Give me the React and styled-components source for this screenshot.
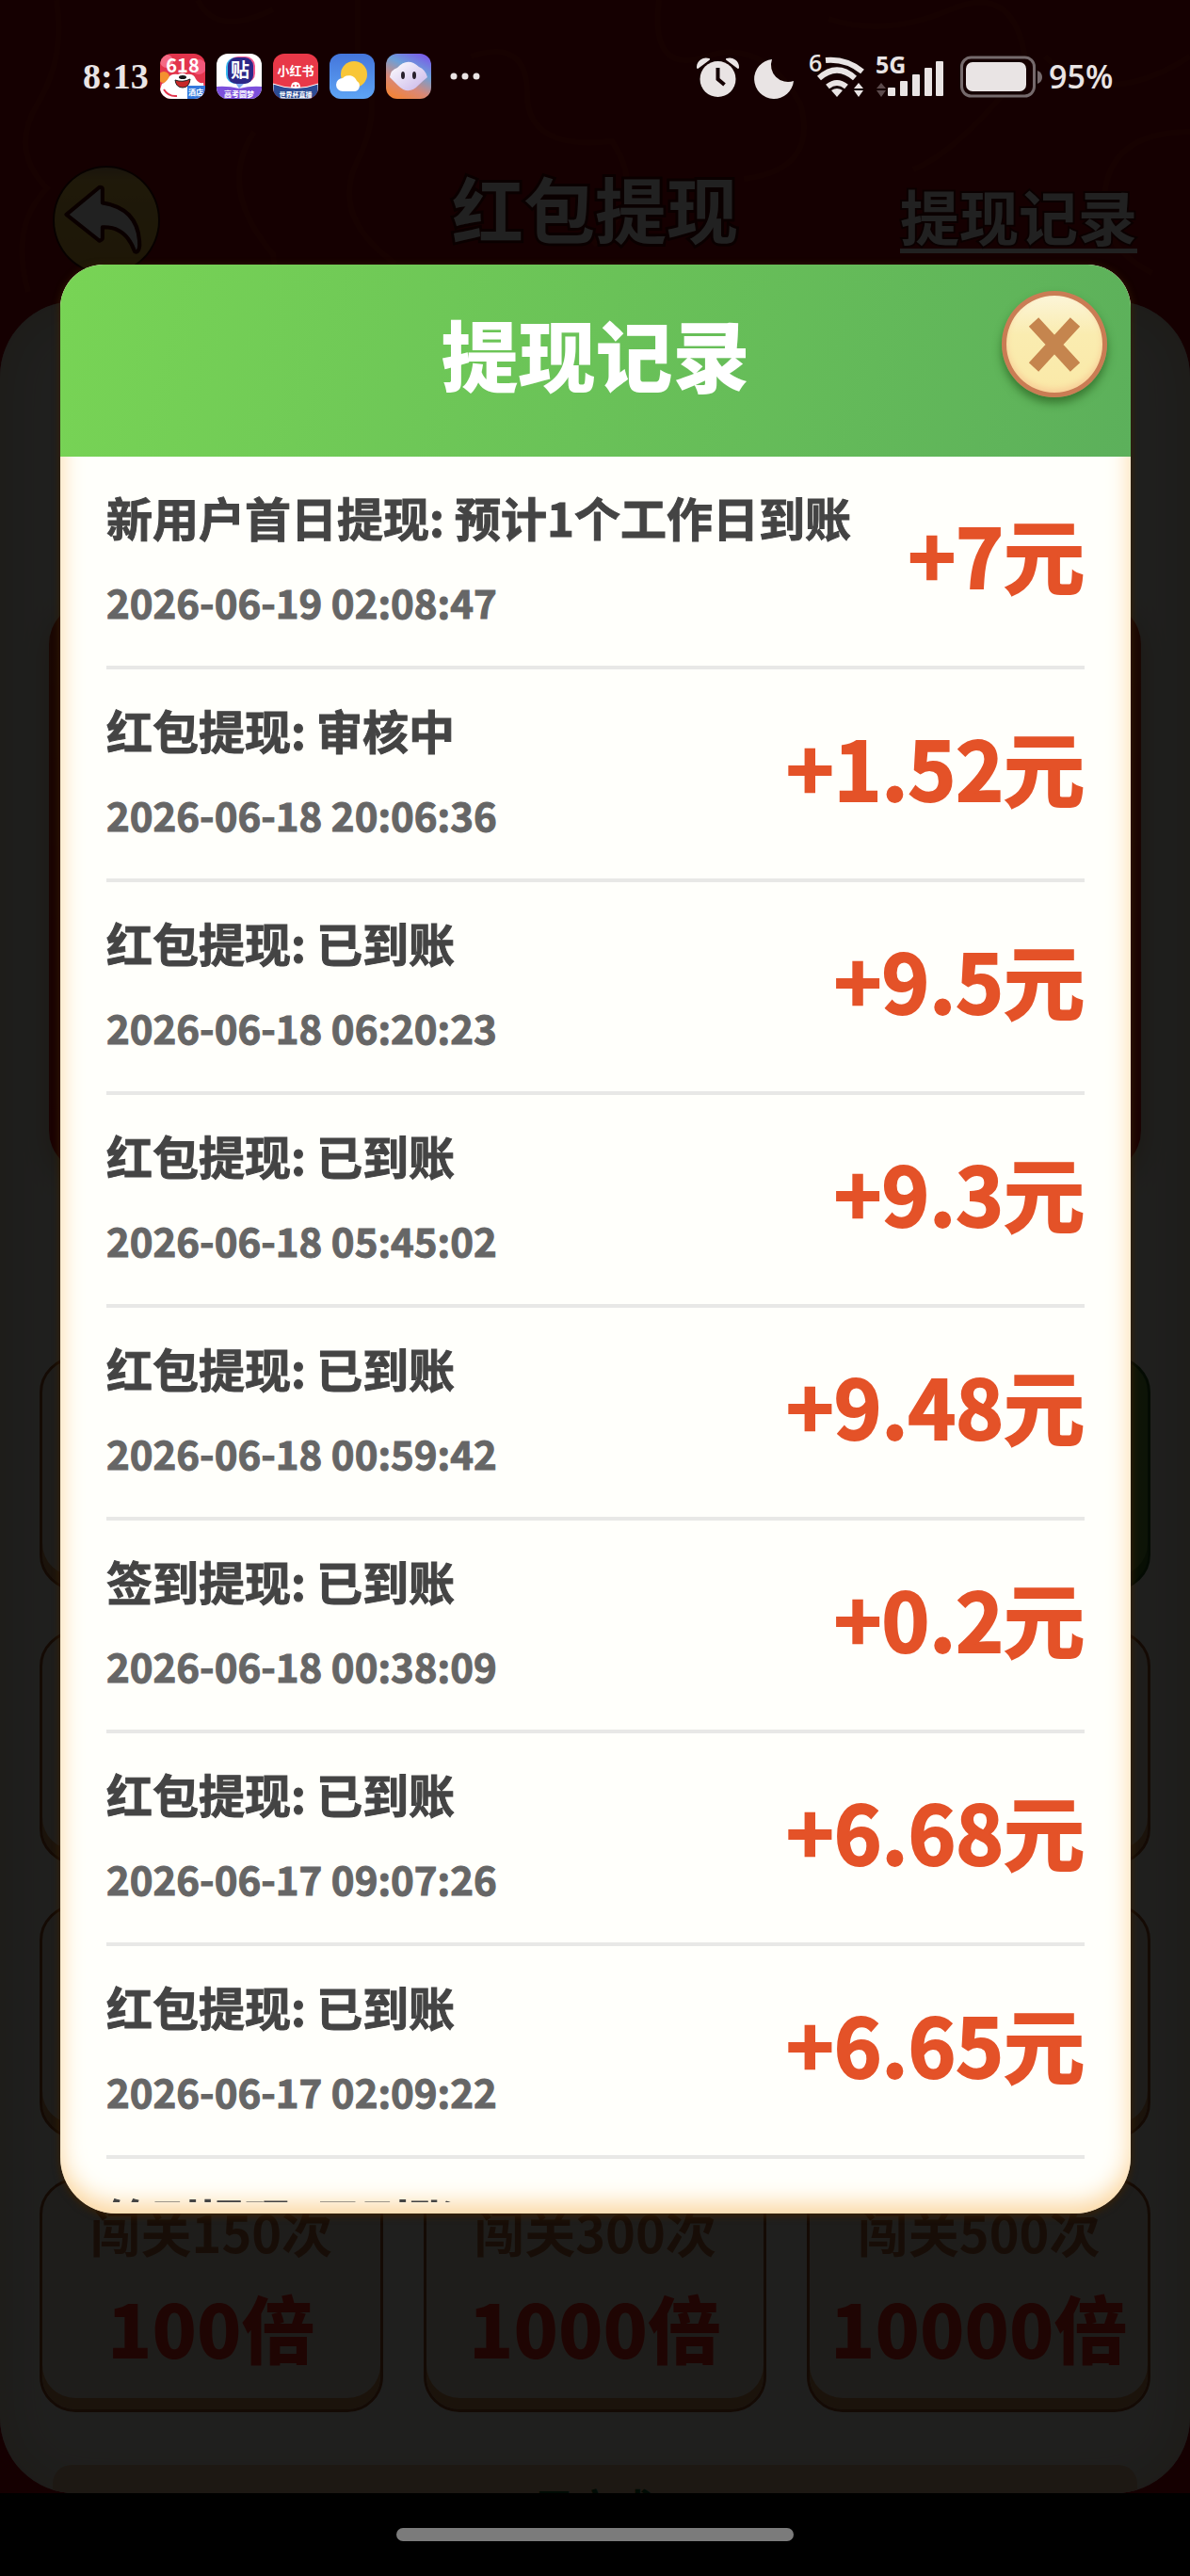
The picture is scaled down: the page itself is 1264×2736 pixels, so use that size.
import React from "react";
import styled, { createGlobalStyle } from "styled-components";

const GlobalStyle = createGlobalStyle`
  * {
    box-sizing: border-box;
  }

  body {
    margin: 0;
    background: #000;
    font-family: "Noto Sans CJK SC", "Noto Sans", sans-serif;
  }

  button {
    padding: 0;
    font: inherit;
    cursor: pointer;
  }

  h1,
  h2,
  p,
  ul {
    margin: 0;
    padding: 0;
  }
`;

const records = [
  { title: "新用户首日提现: 预计1个工作日到账", time: "2026-06-19 02:08:47", amount: "7" },
  { title: "红包提现: 审核中", time: "2026-06-18 20:06:36", amount: "1.52" },
  { title: "红包提现: 已到账", time: "2026-06-18 06:20:23", amount: "9.5" },
  { title: "红包提现: 已到账", time: "2026-06-18 05:45:02", amount: "9.3" },
  { title: "红包提现: 已到账", time: "2026-06-18 00:59:42", amount: "9.48" },
  { title: "签到提现: 已到账", time: "2026-06-18 00:38:09", amount: "0.2" },
  { title: "红包提现: 已到账", time: "2026-06-17 09:07:26", amount: "6.68" },
  { title: "红包提现: 已到账", time: "2026-06-17 02:09:22", amount: "6.65" },
  { title: "签到提现: 已到账" },
];

const tiles = [
  { id: 1 },
  { id: 2 },
  { id: 3, active: true },
  { id: 4 },
  { id: 5 },
  { id: 6 },
  { id: 7 },
  { id: 8 },
  { id: 9 },
  { id: 10, label: "闯关150次", value: "100倍" },
  { id: 11, label: "闯关300次", value: "1000倍" },
  { id: 12, label: "闯关500次", value: "10000倍" },
];

/* ---------- page shell ---------- */

const Page = styled.div`
  position: relative;
  min-height: 100vh;
  display: flex;
  flex-direction: column;
`;

const Screen = styled.main`
  position: relative;
  flex: 1;
  display: flex;
  flex-direction: column;
  background: #a3000c;
  overflow: hidden;
`;

const Pattern = styled.svg`
  position: absolute;
  top: 0;
  left: 0;
  width: 100%;
  height: 420px;
  fill: none;
  stroke: #b0120a;
  stroke-width: 6;
`;

const NavBar = styled.footer`
  height: 88px;
  display: flex;
  justify-content: center;
  padding-top: 37px;
  background: #000;
`;

const HomeHandle = styled.span`
  width: 422px;
  height: 14px;
  border-radius: 7px;
  background: #7b7b7b;
`;

/* ---------- status bar ---------- */

const StatusBar = styled.header`
  position: absolute;
  z-index: 3;
  top: 0;
  left: 0;
  right: 0;
  height: 162px;
  padding: 0 80px 0 88px;
  display: flex;
  align-items: center;
  justify-content: space-between;
  color: #e9e4e4;
`;

const StatusGroup = styled.div`
  display: flex;
  align-items: center;
  gap: ${(props) => props.$gap}px;
`;

const Clock = styled.time`
  width: 70px;
  font: bold 38px/48px "Liberation Serif", serif;
`;

const Percent = styled.span`
  width: 70px;
  font: 600 34px/44px "Open Sans", sans-serif;
`;

/* ---------- page behind the dialog ---------- */

const TopBar = styled.div`
  position: relative;
  margin-top: 170px;
  height: 150px;
  padding: 0 56px;
  display: grid;
  grid-template-columns: 1fr auto 1fr;
  align-items: start;
`;

const BackButton = styled.button`
  width: 114px;
  height: 116px;
  margin-top: 6px;
  border: 2px solid #3a0800;
  border-radius: 50%;
  background: linear-gradient(#c8a060, #ecc04c 12%, #e0ae38);
`;

const PageTitle = styled.h1`
  font-size: 76px;
  line-height: 100px;
  color: #fff;
  -webkit-text-stroke: 6px #500000;
  paint-order: stroke fill;
`;

const RecordLink = styled.a`
  justify-self: end;
  margin-top: 22px;
  border-bottom: 5px solid #fff;
  font-size: 63px;
  font-weight: 700;
  line-height: 72px;
  color: #fff;
  text-decoration: none;
  -webkit-text-stroke: 4px #500000;
  paint-order: stroke fill;
`;

const Card = styled.section`
  position: relative;
  flex: 1;
  padding-top: 320px;
  display: flex;
  flex-direction: column;
  border-radius: 80px;
  background: #eeeee6;
  box-shadow: inset 0 0 60px #d8c8a8;
  overflow: hidden;
`;

const Banner = styled.div`
  height: 605px;
  margin: 0 52px;
  border-radius: 44px;
  background: linear-gradient(#c83c18, #c41c10 60%, #c81410);
  box-shadow: 0 10px 30px #d0b890;
`;

const Tiles = styled.div`
  margin: 196px 42px 0;
  display: grid;
  grid-template-columns: repeat(3, 1fr);
  grid-auto-rows: 248px;
  gap: 43px;
`;

const Tile = styled.button`
  display: flex;
  flex-direction: column;
  align-items: center;
  justify-content: flex-start;
  padding-top: 18px;
  border: 3px solid ${(props) => (props.$active ? "#205818" : "#984c20")};
  border-radius: 38px;
  background: ${(props) => (props.$active ? "linear-gradient(90deg, #b8a040, #68983c)" : "#e4dccc")};
  box-shadow: inset 0 -12px 0 ${(props) => (props.$active ? "#407820" : "#d09458")};
  white-space: nowrap;
`;

const TileLabel = styled.span`
  font-size: 54px;
  font-weight: 700;
  line-height: 70px;
  color: #b06838;
`;

const TileValue = styled.span`
  margin-top: 16px;
  font-size: 78px;
  font-weight: 900;
  line-height: 100px;
  color: #f02c1c;
`;

const CardFooter = styled.p`
  flex: 1 0 30px;
  min-height: 0;
  margin: 56px 56px 0;
  padding-top: 14px;
  border-radius: 20px 20px 0 0;
  background: #dcb894;
  text-align: center;
  font-size: 42px;
  font-weight: 700;
  line-height: 60px;
  color: #085820;
  overflow: hidden;
`;

/* ---------- dialog ---------- */

const Overlay = styled.div`
  position: absolute;
  z-index: 2;
  inset: 0;
  padding: 281px 63px 297px 64px;
  display: flex;
  background: rgba(0, 0, 0, 0.87);
`;

const Dialog = styled.section`
  position: relative;
  flex: 1;
  min-width: 0;
  display: flex;
  flex-direction: column;
  padding-bottom: 12px;
  border-radius: 46px 46px 60px 60px;
  background: #fffffb;
  box-shadow: inset 0 -10px 24px #fbd6a0, 0 2px 8px #3c2204;
  overflow: hidden;
`;

const DialogHeader = styled.header`
  flex: none;
  height: 204px;
  display: flex;
  align-items: center;
  justify-content: center;
  padding-bottom: 16px;
  background: linear-gradient(105deg, #78d455, #5cb05b);
`;

const DialogTitle = styled.h2`
  font-size: 82px;
  font-weight: 900;
  line-height: 110px;
  color: #fff;
`;

const CloseButton = styled.button`
  position: absolute;
  top: 28px;
  right: 25px;
  width: 112px;
  height: 113px;
  display: flex;
  align-items: center;
  justify-content: center;
  border: 5px solid #ca7c54;
  border-radius: 50%;
  background: linear-gradient(#fcf5d8, #faecb0 40%, #fae9a8);
  box-shadow: inset 0 -4px 6px #f8cf98, 0 6px 10px rgba(30, 80, 20, 0.6);
`;

const RecordList = styled.ul`
  flex: 1;
  height: 0;
  margin: 0 49px;
  overflow: hidden;
  list-style: none;
`;

const RecordItem = styled.li`
  height: 226px;
  padding-top: 34px;
  display: flex;
  justify-content: space-between;
  border-bottom: 4px solid #e8e8e6;
  white-space: nowrap;
`;

const RecordTitle = styled.p`
  font-size: 49px;
  font-weight: 700;
  line-height: 60px;
  color: #444;
  -webkit-text-stroke: 1px #444;
`;

const RecordTime = styled.time`
  display: block;
  margin-top: 30px;
  font-size: 42px;
  font-weight: 700;
  line-height: 60px;
  color: #666;
  -webkit-text-stroke: 1px #666;
`;

const Amount = styled.strong`
  font-size: 86px;
  font-weight: 700;
  line-height: 138px;
  color: #e45228;
  -webkit-text-stroke: 2px #e45228;
`;

/* ---------- icons ---------- */

function AppIcons() {
  return (
    <svg width='348' height='48' viewBox='0 0 348 48' fontFamily='Noto Sans CJK SC' fontWeight='700' textAnchor='middle'>
      <defs>
        <clipPath id='tile'>
          <rect width='48' height='48' rx='12' />
        </clipPath>
        <linearGradient id='sky' x2='0' y2='1'>
          <stop stopColor='#4476dc' />
          <stop offset='1' stopColor='#5ea4f4' />
        </linearGradient>
        <linearGradient id='pet' x1='0.8' y1='0' x2='0.3' y2='1'>
          <stop stopColor='#7a5ce8' />
          <stop offset='0.35' stopColor='#6ca0d8' />
          <stop offset='0.7' stopColor='#d88878' />
          <stop offset='1' stopColor='#f0843c' />
        </linearGradient>
        <linearGradient id='petFace' x2='1' y2='1'>
          <stop stopColor='#fff' />
          <stop offset='1' stopColor='#c8b4e8' />
        </linearGradient>
      </defs>

      <g clipPath='url(#tile)'>
        <rect width='48' height='48' fill='#e2344c' />
        <circle cx='7' cy='8' r='7' fill='#f46a84' />
        <circle cx='41' cy='14' r='8' fill='#f4587c' />
        <circle cx='4' cy='25' r='6' fill='#f49030' />
        <path d='M2 32q4-1 7-6q2-5 10-4q5-3 9 0q8-1 10 5q3 5 8 4l2 17H0V38z' fill='#fff' />
        <path d='M16 28q8 3 16-1q-1 9-8 9t-8-8z' fill='#c82828' stroke='#222' strokeWidth='1' />
        <ellipse cx='24' cy='25' rx='4' ry='2' fill='#181818' />
        <path d='M4 38q5 8 14 7' fill='none' stroke='#e2344c' strokeWidth='2' />
        <rect x='29' y='34' width='19' height='14' fill='#3478dc' />
        <text x='24' y='20' fontSize='20' fill='#fff'>618</text>
        <text x='38' y='44' fontSize='8' fill='#fff'>酒店</text>
      </g>

      <g transform='translate(60)'>
        <g clipPath='url(#tile)'>
          <rect width='48' height='48' fill='#fff' />
          <path d='M0 35q12-1 24 2q12-3 24-2v13H0z' fill='#7c50dc' />
          <rect x='10' y='4' width='28' height='28' rx='10' fill='#38b8f0' />
          <rect x='13' y='3' width='28' height='28' rx='10' fill='#f05890' />
          <path d='M20 31h10l-6 6z' fill='#7ea8f0' />
          <rect x='12' y='4' width='27' height='28' rx='9' fill='#2c2888' />
          <text x='25' y='25' fontSize='20' fill='#fff'>贴</text>
          <text x='24' y='46' fontSize='8' fill='#fff'>高考圆梦</text>
        </g>
      </g>

      <g transform='translate(120)'>
        <g clipPath='url(#tile)'>
          <rect width='48' height='48' fill='#e83848' />
          <path d='M0 32q24 9 48 0v16H0z' fill='#2c4c94' stroke='#fff' strokeWidth='1' />
          <path d='M19 36q0-6 5-6t5 6' fill='#fff' />
          <circle cx='22' cy='34' r='1' fill='#e83848' />
          <circle cx='26' cy='34' r='1' fill='#e83848' />
          <text x='24' y='23' fontSize='13' fill='#fff'>小红书</text>
          <text x='24' y='46' fontSize='7' fill='#fff'>世界杯直播</text>
        </g>
      </g>

      <g transform='translate(180)'>
        <rect width='48' height='48' rx='12' fill='url(#sky)' />
        <circle cx='26' cy='22' r='14' fill='#f8c638' />
        <path d='M14 40a7 7 0 0 1 0-14a9 9 0 0 1 15 3a6 6 0 0 1-2 11z' fill='#fff' />
      </g>

      <g transform='translate(240)'>
        <rect width='48' height='48' rx='12' fill='url(#pet)' />
        <path d='M4 25Q5 17 12 15Q23 3 35 14Q42 17 44 25Q39 29 35 33Q24 45 13 34Q8 29 4 25z' fill='url(#petFace)' />
        <ellipse cx='18' cy='23' rx='2' ry='4' fill='#28202c' />
        <ellipse cx='30' cy='23' rx='2' ry='4' fill='#28202c' />
      </g>

      <g fill='#e9e4e4'>
        <circle cx='312' cy='24' r='3.5' />
        <circle cx='324' cy='24' r='3.5' />
        <circle cx='336' cy='24' r='3.5' />
      </g>
    </svg>
  );
}

function SystemIcons() {
  return (
    <svg width='367' height='50' viewBox='740 55 367 50' fill='#e9e4e4'>
      {/* alarm */}
      <path d='M741 71a9 9 0 0 1 12-9z M784 71a9 9 0 0 0-12-9z' stroke='#e9e4e4' strokeWidth='2' strokeLinejoin='round' />
      <circle cx='762.5' cy='83' r='19' />
      <path d='M762.5 71v12l7 6' fill='none' stroke='#140002' strokeWidth='4' />
      {/* do not disturb */}
      <path d='M820 62a21 21 0 1 0 23 23a18 18 0 0 1-23-23z' />
      {/* wifi */}
      <g fill='none' stroke='#e9e4e4' strokeWidth='6'>
        <path d='M877 63q22-2 39 12' />
        <path d='M870 82q19-17 38 0' />
        <path d='M879 91q10-8 20 0' />
      </g>
      <path d='M883 95q6-4 12 0l-6 7z' />
      <path d='M907 93l5-6l5 6z M907 95l5 7l5-7z' />
      <text x='859' y='75' fontFamily='Open Sans' fontWeight='600' fontSize='25'>6</text>
      {/* mobile signal */}
      <text x='930' y='77' fontFamily='Open Sans' fontWeight='700' fontSize='25'>5G</text>
      <path d='M931 93l5-6l5 6z M931 95l5 7l5-7z' fill='#5c4a4c' />
      <rect x='943' y='92' width='8' height='9' rx='1' />
      <rect x='956' y='85' width='8' height='16' rx='1' />
      <rect x='969' y='78' width='8' height='23' rx='1' />
      <rect x='982' y='71' width='8' height='30' rx='1' />
      <rect x='994' y='64' width='8' height='37' rx='1' />
      {/* battery */}
      <rect x='1021.5' y='60' width='77' height='41' rx='10' fill='none' stroke='#756a6c' strokeWidth='3' />
      <rect x='1026' y='65' width='64' height='31' rx='7' />
      <path d='M1102 74q5 2 5 7t-5 7z' fill='#756a6c' />
    </svg>
  );
}

function BackArrow() {
  return (
    <svg width='110' height='112' viewBox='0 0 106 108'>
      <path
        d='M46 20L12 48l34 27q3-1 3-3v-11q24-1 33 25q4 2 5-6q0-38-38-44V22q0-2-3-2z'
        fill='#fff'
        stroke='#500000'
        strokeWidth='4'
        strokeLinejoin='round'
      />
    </svg>
  );
}

function CloseIcon() {
  return (
    <svg width='60' height='64' viewBox='0 0 60 64'>
      <path d='M8 8l44 48M52 8L8 56' stroke='#c5854e' strokeWidth='14' />
    </svg>
  );
}

export default function App() {
  return (
    <Page>
      <GlobalStyle />

      <StatusBar>
        <StatusGroup $gap={12}>
          <Clock>8:13</Clock>
          <AppIcons />
        </StatusGroup>
        <StatusGroup $gap={7}>
          <SystemIcons />
          <Percent>95%</Percent>
        </StatusGroup>
      </StatusBar>

      <Screen>
        <Pattern viewBox='0 0 1264 420' preserveAspectRatio='none'>
          <path d='M60 0q10 60-20 110t10 90q-40 40-20 110M210 0q20 40 80 10M270 140q-40 60 20 130q10 50-40 130' />
          <path d='M380 0v60q30 50 0 110q-30 60 40 110M500 60q60-20 60 40t90 50q40 60-20 110' />
          <path d='M700 0q-10 80 50 60t100 50q20 70-60 80M880 20q60 20 130-10t80 60q-70 90-120 110' />
          <path d='M1264 140q-80 0-90 60t50 90M1110 60q60 60 154 0' />
        </Pattern>

        <TopBar>
          <BackButton type='button' aria-label='返回'>
            <BackArrow />
          </BackButton>
          <PageTitle>红包提现</PageTitle>
          <RecordLink href='#records'>提现记录</RecordLink>
        </TopBar>

        <Card>
          <Banner />
          <Tiles>
            {tiles.map((tile) => (
              <Tile key={tile.id} type='button' $active={tile.active}>
                {tile.label && <TileLabel>{tile.label}</TileLabel>}
                {tile.value && <TileValue>{tile.value}</TileValue>}
              </Tile>
            ))}
          </Tiles>
          <CardFooter>已完成</CardFooter>
        </Card>

        {/* the nav bar below stays uncovered */}
        <Overlay>
          <Dialog id='records' role='dialog' aria-labelledby='records-title'>
            <DialogHeader>
              <DialogTitle id='records-title'>提现记录</DialogTitle>
            </DialogHeader>
            <CloseButton type='button' aria-label='关闭'>
              <CloseIcon />
            </CloseButton>
            <RecordList>
              {records.map((record, i) => (
                <RecordItem key={i}>
                  <div>
                    <RecordTitle>{record.title}</RecordTitle>
                    {record.time && <RecordTime>{record.time}</RecordTime>}
                  </div>
                  {record.amount && <Amount>+{record.amount}元</Amount>}
                </RecordItem>
              ))}
            </RecordList>
          </Dialog>
        </Overlay>
      </Screen>

      <NavBar>
        <HomeHandle />
      </NavBar>
    </Page>
  );
}
